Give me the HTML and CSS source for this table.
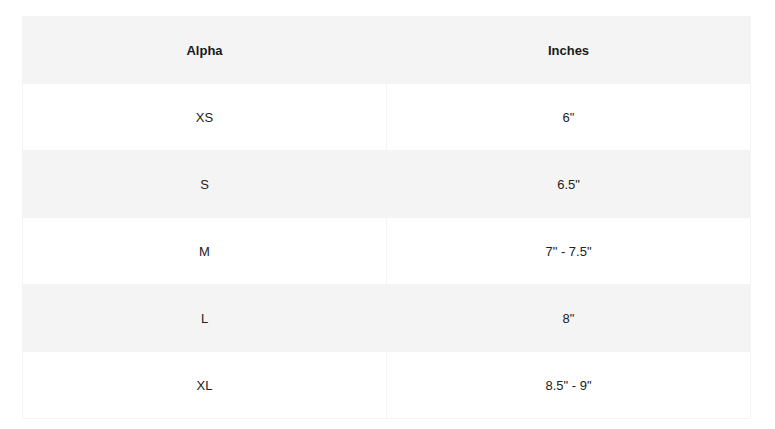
FILE: index.html
```html
<!DOCTYPE html>
<html>
<head>
<meta charset="utf-8">
<link rel="stylesheet" href="styles.css">
</head>
<body>
<div class="wrap">
<table class="size-table">
<thead>
<tr class="row-gray"><th>Alpha</th><th>Inches</th></tr>
</thead>
<tbody>
<tr class="row-white"><td>XS</td><td>6"</td></tr>
<tr class="row-gray"><td>S</td><td>6.5"</td></tr>
<tr class="row-white"><td>M</td><td>7" - 7.5"</td></tr>
<tr class="row-gray"><td>L</td><td>8"</td></tr>
<tr class="row-white"><td>XL</td><td>8.5" - 9"</td></tr>
</tbody>
</table>
</div>
</body>
</html>
```

FILE: styles.css
```css
html, body {
  margin: 0;
  padding: 0;
  background: #ffffff;
}
.wrap {
  padding: 16px 24px 0 22px;
}
.size-table {
  width: 729px;
  border-collapse: collapse;
  font-family: "Liberation Sans", Arial, sans-serif;
  font-size: 13px;
  color: #222222;
  table-layout: fixed;
}
.size-table th,
.size-table td {
  height: 66px;
  padding: 0;
  text-align: center;
  vertical-align: middle;
  border: 1px solid #f4f4f4;
}
.size-table th {
  font-weight: bold;
  color: #1a1a1a;
}
.size-table th:first-child,
.size-table td:first-child {
  width: 363px;
}
.row-gray {
  background: #f4f4f4;
}
.row-white {
  background: #ffffff;
}
```
